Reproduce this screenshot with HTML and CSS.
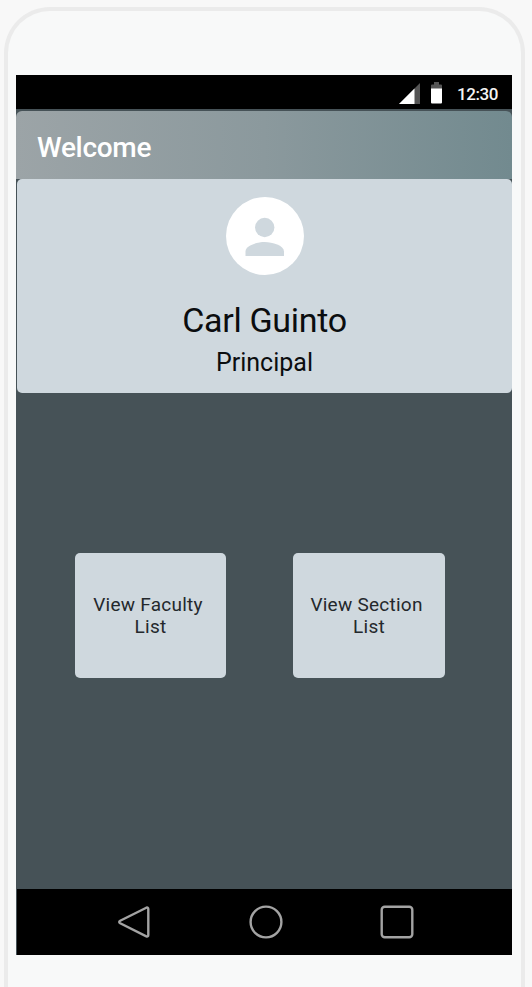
FILE: index.html
```html
<!DOCTYPE html>
<html lang="en">
<head>
<meta charset="utf-8">
<title>Welcome</title>
<link rel="stylesheet" href="styles.css">
</head>
<body>
<div class="phone">
  <div class="screen">
    <div class="status">
      <svg class="signal" width="21" height="21" viewBox="0 0 21 21"><path d="M21 0V21H0Z" fill="#555"/><path d="M15.500 5.500V21H0Z" fill="#fff"/></svg>
      <svg class="battery" width="11" height="22" viewBox="0 0 11 22"><path d="M0 7V3.500Q0 2.500 1 2.500H3V0H8V2.500H10Q11 2.500 11 3.500V7Z" fill="#555"/><path d="M0 6.500H11V20.500Q11 21.500 10 21.500H1Q0 21.500 0 20.500Z" fill="#fff"/></svg>
      <span class="time">12:30</span>
    </div>
    <header class="appbar"><h1 class="title">Welcome</h1></header>
    <section class="profile">
      <svg class="avatar" width="78" height="78" viewBox="0 0 78 78"><circle cx="39" cy="39" r="39" fill="#fff"/><circle cx="38.700" cy="30.500" r="9.700" fill="#cfd8de"/><path d="M19.500 59V54.500C19.500 48.500 31 45 38.700 45S58 48.500 58 54.500V59Z" fill="#cfd8de"/></svg>
      <h2 class="name">Carl Guinto</h2>
      <p class="role">Principal</p>
    </section>
    <main class="actions">
      <button class="action">View Faculty&nbsp;<br>List</button>
      <button class="action action-wide">View Section&nbsp;<br>List</button>
    </main>
    <nav class="navbar">
      <svg width="34" height="34" viewBox="0 0 34 34"><path d="M29.300 2.700L3.200 15.800Q1.200 17 3.200 18.200L29.300 31.300Q31.300 32 31.300 30V4Q31.300 2 29.300 2.700Z"/></svg>
      <svg width="34" height="34" viewBox="0 0 34 34"><circle cx="17" cy="17" r="15.400"/></svg>
      <svg width="34" height="34" viewBox="0 0 34 34"><rect x="1.700" y="1.700" width="30.600" height="30.600" rx="3"/></svg>
    </nav>
  </div>
</div>
</body>
</html>
```
FILE: styles.css
```css
* {
  box-sizing: border-box;
}

body {
  margin: 0;
  height: 987px;
  padding: 7px 7px 0 4px;
  overflow: hidden;
  background: #f8f8f8;
  font-family: Roboto, sans-serif;
}

.phone {
  height: 980px;
  padding: 64px 9px 0 8px;
  border: 4px solid #ebebeb;
  border-bottom: 0;
  border-radius: 46px 46px 0 0;
  background: #f8f9f9;
}

.screen {
  display: flex;
  flex-direction: column;
  width: 496px;
  height: 880px;
  background: #465257;
}

.status {
  display: flex;
  justify-content: flex-end;
  height: 34px;
  margin-bottom: 2px;
  padding: 8px 13px 0 0;
  background: #000;
}

.battery {
  margin: -1px 15px 0 11px;
}

.time {
  width: 42px;
  color: #f4f4f4;
  font-size: 17px;
  font-weight: 500;
  letter-spacing: -0.4px;
  line-height: 23px;
  white-space: nowrap;
}

.appbar {
  display: flex;
  align-items: center;
  height: 68px;
  padding: 5px 0 0 21px;
  border-radius: 6px 6px 0 0;
  background: linear-gradient(90deg, #9ca4a7, #8b999d 50%, #728a8f);
}

.title {
  margin: 0;
  color: #fff;
  font-size: 28px;
  font-weight: 500;
  letter-spacing: -0.3px;
  line-height: 35px;
}

.profile {
  display: flex;
  flex-direction: column;
  align-items: center;
  height: 214px;
  margin-left: 1px;
  padding-top: 18px;
  border-radius: 5px;
  background: #cfd8de;
  color: #0b0d0f;
}

.name {
  margin: 24px 0 0;
  font-size: 34px;
  font-weight: 400;
  letter-spacing: -0.3px;
  line-height: 42px;
}

.role {
  margin: 4px 0 0;
  font-size: 25px;
  line-height: 35px;
}

.actions {
  display: flex;
  flex: 1;
  gap: 67px;
  padding: 160px 0 0 59px;
}

.action {
  width: 151px;
  height: 125px;
  padding: 0;
  border: 0;
  border-radius: 5px;
  background: #cfd8de;
  color: #24282c;
  font: 400 19px/22px Roboto, sans-serif;
  letter-spacing: 0.25px;
}

.action-wide {
  width: 152px;
}

.navbar {
  display: flex;
  align-items: center;
  gap: 97.5px;
  height: 66px;
  margin-left: 1px;
  padding-left: 100px;
  background: #000;
}

.navbar svg {
  fill: none;
  stroke: #a3a3a3;
  stroke-width: 2.4;
}
```
